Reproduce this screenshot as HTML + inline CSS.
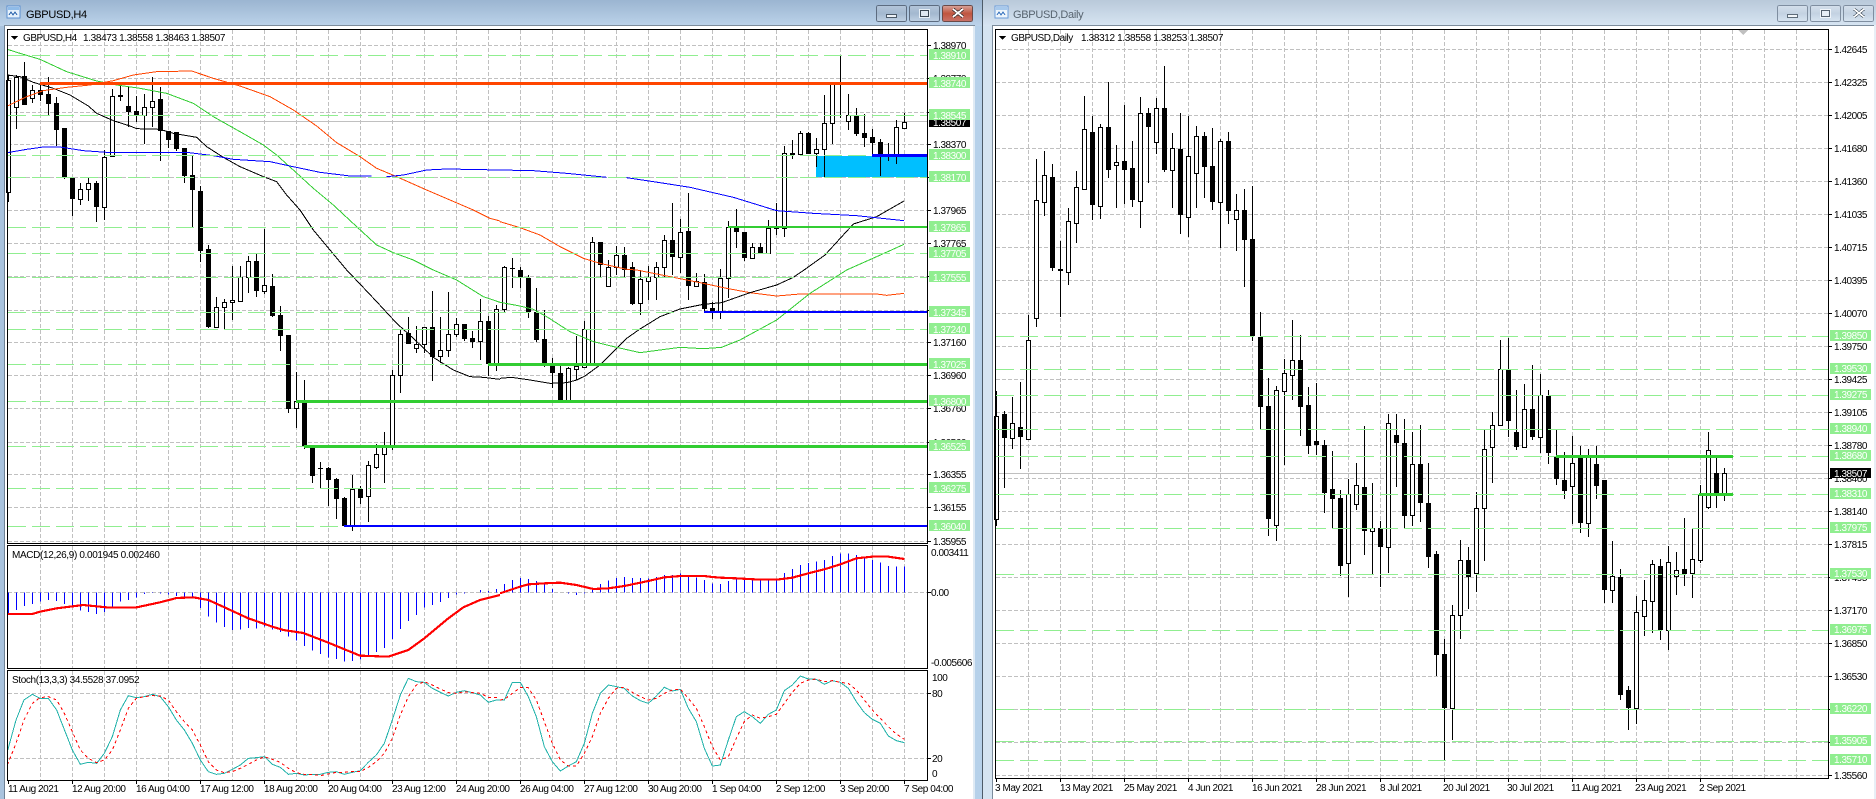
<!DOCTYPE html>
<html><head><meta charset="utf-8"><title>GBPUSD</title>
<style>
html,body{margin:0;padding:0;background:#fff;overflow:hidden}
svg{display:block}
text{font-family:"Liberation Sans",sans-serif;font-size:10px;letter-spacing:-.45px;fill:#000}
.w text{fill:#fff}
.h{letter-spacing:-.35px}
.tt{font-size:11px;letter-spacing:-.3px}
path,line,rect,polyline{shape-rendering:crispEdges}
.gr{fill:none;stroke:#c0c0c0;stroke-width:1;stroke-dasharray:4 2}
.lv{fill:none;stroke:#90ee90;stroke-width:1;stroke-dasharray:18 6}
.wk{fill:none;stroke:#000;stroke-width:1}
.bb{fill:#000}
.wb{fill:#fff;stroke:#000;stroke-width:1}
.ma{fill:none;stroke-width:3}
</style></head><body>
<svg width="1876" height="799" viewBox="0 0 1876 799" xmlns="http://www.w3.org/2000/svg">
<defs>
<linearGradient id="a" x1="0" y1="0" x2="0" y2="1"><stop offset="0" stop-color="#9bb5d1"/><stop offset="1" stop-color="#bcd3ea"/></linearGradient>
<linearGradient id="b" x1="0" y1="0" x2="0" y2="1"><stop offset="0" stop-color="#b9c9da"/><stop offset="1" stop-color="#d7e5f2"/></linearGradient>
<linearGradient id="c" x1="0" y1="0" x2="0" y2="1"><stop offset="0" stop-color="#b4c6da"/><stop offset=".5" stop-color="#a3b8cf"/><stop offset="1" stop-color="#c0d2e4"/></linearGradient>
<linearGradient id="d" x1="0" y1="0" x2="0" y2="1"><stop offset="0" stop-color="#d8a59c"/><stop offset=".5" stop-color="#c0553f"/><stop offset="1" stop-color="#c9736a"/></linearGradient>
<linearGradient id="e" x1="0" y1="0" x2="0" y2="1"><stop offset="0" stop-color="#d5e0ec"/><stop offset=".5" stop-color="#c3d2e2"/><stop offset="1" stop-color="#d8e5f1"/></linearGradient>
</defs>
<rect width="1876" height="799" fill="#fff"/>
<!-- left window frame -->
<rect x="0" y="0" width="983" height="26" fill="url(#a)"/>
<rect x="0" y="26" width="4" height="773" fill="#a9c3de"/>
<rect x="4" y="26" width="1" height="773" fill="#6f8296"/>
<rect x="975" y="26" width="7" height="773" fill="#b6d1ea"/>
<rect x="973" y="26" width="2" height="773" fill="#dfeaf4"/>
<rect x="4" y="25" width="971" height="1" fill="#7c8c9c"/>
<rect x="982" y="0" width="1" height="799" fill="#4d5b68"/>
<!-- right window frame -->
<rect x="983" y="0" width="893" height="26" fill="url(#b)"/>
<rect x="983" y="26" width="9" height="773" fill="#d5e4f1"/>
<rect x="992" y="26" width="1" height="773" fill="#7c8c9c"/>
<rect x="992" y="25" width="882" height="1" fill="#7c8c9c"/>
<rect x="1874" y="25" width="2" height="774" fill="#e8eff6"/>
<!-- title bars -->
<g>
<rect x="7" y="6" width="13" height="12" fill="#e6f1fb" stroke="#5b8fd0" stroke-width="1"/>
<rect x="8" y="7" width="11" height="3" fill="#8fbbe8"/>
<path d="M9 15l2-3 2 3 2-3 2 3" fill="none" stroke="#3f73b5" stroke-width="1"/>
<text x="26" y="18" class="tt" fill="#101820">GBPUSD,H4</text>
<rect x="876.5" y="5.5" width="30" height="16" rx="2" fill="url(#c)" stroke="#5d6c80"/>
<rect x="886.5" y="14.5" width="10" height="3" fill="#eef3f8" stroke="#4a5866"/>
<rect x="909.5" y="5.5" width="30" height="16" rx="2" fill="url(#c)" stroke="#5d6c80"/>
<rect x="919.5" y="9.5" width="10" height="8" fill="none" stroke="#e6eef5"/>
<rect x="920.5" y="10.5" width="8" height="6" fill="#dfe8f1" stroke="#3a4652"/>
<rect x="942.5" y="5.5" width="30" height="16" rx="2" fill="url(#d)" stroke="#6a4a48"/>
<path d="M953 9l10 8M963 9l-10 8" stroke="#4c3a38" stroke-width="3.4" fill="none"/>
<path d="M953 9l10 8M963 9l-10 8" stroke="#fff" stroke-width="1.8" fill="none"/>
</g>
<g>
<rect x="995" y="6" width="13" height="12" fill="#eef5fb" stroke="#6a9bd8" stroke-width="1"/>
<rect x="996" y="7" width="11" height="3" fill="#a7c9ec"/>
<path d="M997 15l2-3 2 3 2-3 2 3" fill="none" stroke="#4a80c4" stroke-width="1"/>
<text x="1013" y="18" class="tt" style="fill:#58646f">GBPUSD,Daily</text>
<rect x="1777.5" y="5.5" width="30" height="16" rx="2" fill="url(#e)" stroke="#7f8ea0"/>
<rect x="1787.5" y="14.5" width="10" height="3" fill="#f2f6fa" stroke="#5d6b78"/>
<rect x="1810.5" y="5.5" width="30" height="16" rx="2" fill="url(#e)" stroke="#7f8ea0"/>
<rect x="1820.5" y="9.5" width="10" height="8" fill="none" stroke="#f0f5fa"/>
<rect x="1821.5" y="10.5" width="8" height="6" fill="#e8eff6" stroke="#55616e"/>
<rect x="1843.5" y="5.5" width="30" height="16" rx="2" fill="url(#e)" stroke="#7f8ea0"/>
<path d="M1854 9l10 8M1864 9l-10 8" stroke="#66727e" stroke-width="3.2" fill="none"/>
<path d="M1854 9l10 8M1864 9l-10 8" stroke="#fff" stroke-width="1.6" fill="none"/>
</g>

<!-- ============ LEFT CHART ============ -->
<path class="gr" d="M8 45.5H927M8 78.5H927M8 112.5H927M8 144.5H927M8 177.5H927M8 210.5H927M8 243.5H927M8 276.5H927M8 310.5H927M8 342.5H927M8 375.5H927M8 408.5H927M8 442.5H927M8 474.5H927M8 507.5H927M8 541.5H927M8 592.5H927M8 693.5H927M8 758.5H927"/>
<path class="gr" d="M40.5 30V543M72.5 30V543M104.5 30V543M136.5 30V543M168.5 30V543M200.5 30V543M232.5 30V543M264.5 30V543M296.5 30V543M328.5 30V543M360.5 30V543M392.5 30V543M424.5 30V543M456.5 30V543M488.5 30V543M520.5 30V543M552.5 30V543M584.5 30V543M616.5 30V543M648.5 30V543M680.5 30V543M712.5 30V543M744.5 30V543M776.5 30V543M808.5 30V543M840.5 30V543M872.5 30V543M904.5 30V543"/>
<path class="gr" d="M40.5 546V668M72.5 546V668M104.5 546V668M136.5 546V668M168.5 546V668M200.5 546V668M232.5 546V668M264.5 546V668M296.5 546V668M328.5 546V668M360.5 546V668M392.5 546V668M424.5 546V668M456.5 546V668M488.5 546V668M520.5 546V668M552.5 546V668M584.5 546V668M616.5 546V668M648.5 546V668M680.5 546V668M712.5 546V668M744.5 546V668M776.5 546V668M808.5 546V668M840.5 546V668M872.5 546V668M904.5 546V668"/>
<path class="gr" d="M40.5 671V780M72.5 671V780M104.5 671V780M136.5 671V780M168.5 671V780M200.5 671V780M232.5 671V780M264.5 671V780M296.5 671V780M328.5 671V780M360.5 671V780M392.5 671V780M424.5 671V780M456.5 671V780M488.5 671V780M520.5 671V780M552.5 671V780M584.5 671V780M616.5 671V780M648.5 671V780M680.5 671V780M712.5 671V780M744.5 671V780M776.5 671V780M808.5 671V780M840.5 671V780M872.5 671V780M904.5 671V780"/>
<rect x="8" y="121" width="919" height="1" fill="#c0c0c0"/>
<rect x="816" y="156" width="111" height="21" fill="#00bfff"/>
<path class="wk" d="M8.5 75V202M16.5 75V129M24.5 62V105M32.5 85V103M40.5 85V101M48.5 77V115M56.5 97V146M64.5 128V179M72.5 178V216M80.5 183V205M88.5 178V201M96.5 181V222M104.5 150V220M112.5 89V156M120.5 85V101M128.5 87V127M136.5 96V122M144.5 94V144M152.5 77V127M160.5 87V161M168.5 131V148M176.5 132V151M184.5 148V183M192.5 156V227M200.5 186V262M208.5 245V328M216.5 297V327M224.5 299V329M232.5 266V320M240.5 266V301M248.5 256V293M256.5 254V297M264.5 229V294M272.5 274V317M280.5 306V351M288.5 335V413M296.5 372V428M304.5 380V449M312.5 448V483M320.5 462V488M328.5 467V506M336.5 478V519M344.5 497V526M352.5 475V531M360.5 486V504M368.5 461V522M376.5 444V469M384.5 432V483M392.5 370V450M400.5 329V393M408.5 317V344M416.5 326V353M424.5 327V353M432.5 291V381M440.5 317V363M448.5 292V357M456.5 318V337M464.5 324V341M472.5 331V348M480.5 299V360M488.5 316V376M496.5 305V371M504.5 266V312M512.5 258V288M520.5 267V288M528.5 275V318M536.5 288V342M544.5 310V367M552.5 358V388M560.5 366V403M568.5 367V400M576.5 336V380M584.5 321V368M592.5 237V365M600.5 242V278M608.5 260V286M616.5 246V275M624.5 247V277M632.5 262V305M640.5 270V315M648.5 266V300M656.5 262V300M664.5 235V277M672.5 203V275M680.5 219V273M688.5 193V300M696.5 273V286M704.5 274V312M712.5 302V319M720.5 269V319M728.5 221V298M736.5 209V248M744.5 232V261M752.5 243V258M760.5 243V253M768.5 220V253M776.5 203V235M784.5 146V237M792.5 140V159M800.5 131V154M808.5 132V154M816.5 138V167M824.5 95V177M832.5 83V144M840.5 56V118M848.5 94V130M856.5 108V136M864.5 114V147M872.5 129V155M880.5 139V176M888.5 143V161M896.5 120V164M904.5 113V128"/>
<path class="bb" d="M22 76h5V105h-5zM38 90h5V95h-5zM46 94h5V104h-5zM54 103h5V130h-5zM62 128h5V178h-5zM70 178h5V199h-5zM94 183h5V207h-5zM126 106h5V112h-5zM134 111h5V115h-5zM158 99h5V131h-5zM166 131h5V140h-5zM174 132h5V149h-5zM182 148h5V176h-5zM190 175h5V190h-5zM198 191h5V251h-5zM206 249h5V327h-5zM254 261h5V291h-5zM270 286h5V316h-5zM278 315h5V336h-5zM286 335h5V409h-5zM302 401h5V446h-5zM310 448h5V476h-5zM318 468h5v1h-5zM326 468h5V480h-5zM334 479h5V499h-5zM342 498h5V526h-5zM358 489h5V498h-5zM406 333h5V344h-5zM430 327h5V357h-5zM462 324h5V339h-5zM470 338h5V342h-5zM486 321h5V364h-5zM510 268h5v1h-5zM518 270h5V278h-5zM526 278h5V312h-5zM534 312h5V340h-5zM542 339h5V363h-5zM550 366h5V373h-5zM558 373h5V400h-5zM598 242h5V265h-5zM622 255h5V270h-5zM630 267h5V304h-5zM670 240h5V257h-5zM686 231h5V286h-5zM702 282h5V309h-5zM710 308h5V312h-5zM734 227h5V232h-5zM742 232h5V258h-5zM758 247h5V253h-5zM774 228h5v1h-5zM790 153h5V155h-5zM806 133h5V154h-5zM838 84h5v1h-5zM854 116h5V134h-5zM862 133h5V138h-5zM870 137h5V143h-5zM878 142h5V155h-5zM886 155h5v1h-5z"/>
<path class="wb" d="M6.500 80.5h4V192.500h-4zM14.500 77.500h4V107.500h-4zM30.500 90.500h4V98.500h-4zM78.500 189.500h4V199.500h-4zM86.500 183.500h4V189.500h-4zM102.500 157.500h4V207.500h-4zM110.500 96.500h4V156.500h-4zM118.500 95.500h4v1h-4zM142.500 107.500h4V115.500h-4zM150.500 101.500h4V107.500h-4zM214.500 307.500h4V327.500h-4zM222.500 302.500h4V307.500h-4zM230.500 300.500h4V302.500h-4zM238.500 277.500h4V301.500h-4zM246.500 261.500h4V277.500h-4zM262.500 285.500h4V291.500h-4zM294.500 401.500h4V408.500h-4zM350.500 489.500h4V526.500h-4zM366.500 465.500h4V496.500h-4zM374.500 454.500h4V467.500h-4zM382.500 446.500h4V454.500h-4zM390.500 375.500h4V446.500h-4zM398.500 334.500h4V375.500h-4zM414.500 344.500h4V348.500h-4zM422.500 327.500h4V344.500h-4zM438.500 350.500h4V356.500h-4zM446.500 334.500h4V350.500h-4zM454.500 324.500h4V334.500h-4zM478.500 321.500h4V341.500h-4zM494.500 309.500h4V364.500h-4zM502.500 267.500h4V309.500h-4zM566.500 368.500h4V400.500h-4zM574.500 366.500h4V369.500h-4zM582.500 329.500h4V367.500h-4zM590.500 242.500h4V364.500h-4zM606.500 267.500h4V286.500h-4zM614.500 255.500h4V267.500h-4zM638.500 279.500h4V303.500h-4zM646.500 277.500h4V281.500h-4zM654.500 267.500h4V277.500h-4zM662.500 240.500h4V267.500h-4zM678.500 232.500h4V257.500h-4zM694.500 281.500h4V286.500h-4zM718.500 278.500h4V312.500h-4zM726.500 227.500h4V278.500h-4zM750.500 247.500h4V258.500h-4zM766.500 228.500h4V253.500h-4zM782.500 153.500h4V228.500h-4zM798.500 133.500h4V154.500h-4zM814.500 149.500h4V153.500h-4zM822.500 123.500h4V149.500h-4zM830.500 83.500h4V123.500h-4zM846.500 115.500h4V121.500h-4zM894.500 127.500h4V154.500h-4zM902.500 122.500h4V128.500h-4z"/>
<!-- MAs in zoom coordinates -->
<g transform="scale(.33333)">
<polyline class="ma" stroke="#000" points="22,225 60,230 100,247 160,265 210,285 265,318 290,340 340,362 390,378 410,386 480,388 520,400 590,412 620,440 670,472 720,500 790,530 830,545 860,585 900,630 940,690 990,750 1040,810 1080,852 1130,905 1190,970 1240,1015 1300,1072 1360,1110 1410,1130 1450,1132 1500,1138"/>
<polyline class="ma" stroke="#32cd32" points="22,148 60,160 120,178 200,215 290,243 350,255 420,265 500,280 580,310 640,350 720,395 790,435 830,465 880,510 940,565 1000,615 1070,680 1130,735 1180,758 1240,780 1300,810 1370,840 1450,890 1500,907"/>
<polyline class="ma" stroke="#ff4500" points="22,318 80,290 130,272 200,262 270,255 340,242 400,225 470,215 575,213 640,235 720,258 810,290 880,330 950,378 1010,428 1080,470 1130,505 1190,530 1280,570 1350,600 1420,630 1470,655 1500,663"/>
<polyline class="ma" stroke="#0000ff" points="22,458 80,448 130,441 180,441 250,452 320,457 560,457 640,467 700,478 810,485 870,498 960,517 1050,528 1115,528"/>
<polyline class="ma" stroke="#0000ff" points="1160,530 1210,525 1280,510 1340,507 1500,510"/>
</g>
<g transform="translate(500,0) scale(.33333)">
<polyline class="ma" stroke="#ff4500" points="0,665 60,683 120,705 180,740 250,775 300,790 380,808 410,810 470,822 560,840 610,850 680,865 750,878 830,888 900,882 1130,882 1160,886 1212,880"/>
<polyline class="ma" stroke="#000" points="0,1135 35,1132 90,1140 150,1150 200,1148 230,1140 255,1128 300,1095 380,1015 420,987 480,950 540,927 610,913 665,908 750,878 830,855 880,832 915,808 975,765 1060,672 1130,650 1212,603"/>
<polyline class="ma" stroke="#32cd32" points="0,907 60,918 100,928 140,950 210,995 280,1025 350,1042 420,1058 480,1050 540,1042 610,1046 665,1042 720,1020 830,960 880,920 930,880 1040,810 1130,770 1212,733"/>
<polyline class="ma" stroke="#0000ff" points="0,510 100,512 200,520 320,532"/>
<polyline class="ma" stroke="#0000ff" points="380,533 480,548 570,562 700,592 830,632 940,640 1070,647 1212,662"/>
</g>
<path class="lv" d="M8 55.500H927M8 115.500H927M8 155.500H927M8 177.500H927M8 227.500H927M8 253.500H927M8 277.500H927M8 312.500H927M8 329.500H927M8 364.500H927M8 401.500H927M8 446.500H927M8 488.500H927M8 526.500H927"/>
<rect x="40" y="82" width="887" height="3" fill="#ff4500"/>
<rect x="872" y="154" width="55" height="3" fill="#0000ff"/>
<rect x="728" y="226" width="199" height="2" fill="#32cd32"/>
<rect x="488" y="363" width="439" height="3" fill="#32cd32"/>
<rect x="296" y="400" width="631" height="3" fill="#32cd32"/>
<rect x="304" y="445" width="623" height="3" fill="#32cd32"/>
<rect x="704" y="311" width="223" height="2" fill="#0000ff"/>
<rect x="344" y="525" width="583" height="2" fill="#0000ff"/>
<!-- MACD -->
<g transform="translate(0,530) scale(.33333)">
<path stroke="#0000ff" stroke-width="3" fill="none" d="M25.500 187V250M49.500 187V240M73.500 187V228M97.500 187V222M121.500 187V215M145.500 187V210M169.500 187V213M193.500 187V222M217.500 187V226M241.500 187V242M265.500 187V246M289.500 187V252M313.500 187V246M337.500 187V232M361.500 187V215M385.500 187V210M409.500 187V203M433.500 187V192M457.500 187V189M481.500 187V191M505.500 187V194M529.500 187V198M553.500 187V200M577.500 187V200M601.500 187V234M625.500 187V260M649.500 187V278M673.500 187V291M697.500 187V300M721.500 187V299M745.500 187V294M769.500 187V296M793.500 187V290M817.500 187V298M841.500 187V306M865.500 187V320M889.500 187V332M913.500 187V348M937.500 187V362M961.500 187V372M985.500 187V382M1009.500 187V387M1033.500 187V395M1057.500 187V393M1081.500 187V388M1105.500 187V380M1129.500 187V366M1153.500 187V354M1177.500 187V327M1201.500 187V297M1225.500 187V273M1249.500 187V255M1273.500 187V233M1297.500 187V225M1321.500 187V216M1345.500 187V204M1369.500 187V194M1393.500 187V190M1441.500 187V180M1465.500 187V183M1489.500 187V177"/>
<polyline fill="none" stroke="#ff0000" stroke-width="6.500" points="22,252 97,252 120,245 170,235 250,225 330,233 410,232 480,217 530,204 580,202 625,210 680,235 745,265 817,290 850,300 910,309 985,338 1080,377 1165,380 1225,360 1273,325 1345,265 1390,232 1440,210 1500,195"/>
<polyline fill="none" stroke="#20b2aa" stroke-width="3" points="22,665 48,570 72,510 97,493 120,505 145,505 170,540 217,660 241,703 265,697 290,700 313,670 337,620 361,540 385,497 409,503 433,500 457,493 481,500 505,530 529,570 553,600 577,640 601,690 625,725 649,733 673,730 697,718 721,705 745,685 769,683 793,680 817,703 841,712 865,733 889,730 913,735 937,733 961,733 985,727 1009,725 1033,733 1057,727 1081,722 1105,697 1129,675 1153,640 1177,570 1201,495 1225,445 1249,455 1273,457 1297,475 1321,487 1345,498 1369,487 1393,482 1417,488 1441,495 1465,517 1489,510 1500,510"/>
<polyline fill="none" stroke="#ff0000" stroke-width="3" stroke-dasharray="9 9" points="22,705 48,640 72,570 97,520 120,503 145,500 170,510 193,550 217,605 241,660 265,685 290,698 313,690 337,660 361,600 385,535 409,505 433,500 457,497 481,498 505,510 529,545 553,575 577,600 601,645 625,695 649,720 673,728 697,725 721,715 745,703 769,690 793,680 817,688 841,697 865,715 889,728 913,733 937,733 961,737 985,732 1009,727 1033,727 1057,725 1081,725 1105,712 1129,695 1153,670 1177,625 1201,555 1225,500 1249,465 1273,455 1297,465 1321,477 1345,488 1369,490 1393,485 1417,488 1441,490 1465,502 1489,503 1500,505"/>
</g>
<g transform="translate(500,530) scale(.33333)">
<path stroke="#0000ff" stroke-width="3" fill="none" d="M13.500 187V162M37.500 187V150M61.500 187V144M85.500 187V147M109.500 187V153M133.500 187V160M157.500 187V177M205.500 187V191M229.500 187V195M253.500 187V190M277.500 187V180M301.500 187V162M325.500 187V152M349.500 187V144M373.500 187V141M397.500 187V144M421.500 187V144M445.500 187V145M469.500 187V141M493.500 187V135M517.500 187V135M541.500 187V130M565.500 187V138M589.500 187V143M613.500 187V150M637.500 187V160M661.500 187V162M685.500 187V153M709.500 187V147M733.500 187V147M757.500 187V152M781.500 187V150M805.500 187V148M829.500 187V145M853.500 187V129M877.500 187V117M901.500 187V105M925.500 187V99M949.500 187V95M973.500 187V90M997.500 187V78M1021.500 187V70M1045.500 187V70M1069.500 187V75M1093.500 187V85M1117.500 187V90M1141.500 187V98M1165.500 187V108M1189.500 187V110M1213.500 187V110"/>
<polyline fill="none" stroke="#ff0000" stroke-width="6.500" points="0,190 60,170 85,163 133,160 180,158 229,165 280,177 325,175 373,168 445,153 493,142 541,138 613,138 637,141 661,143 709,145 781,149 829,149 877,143 925,130 973,118 1021,103 1069,85 1117,80 1165,80 1213,87"/>
<polyline fill="none" stroke="#20b2aa" stroke-width="3" points="0,510 13,510 37,457 61,457 85,500 109,560 133,650 157,695 181,723 205,708 229,695 253,640 277,550 301,490 325,465 349,470 373,475 397,498 421,512 445,520 469,498 493,472 517,483 541,478 565,535 589,575 613,655 637,708 661,705 685,630 709,560 733,545 757,560 781,580 805,553 829,540 853,482 877,465 901,438 925,447 949,448 973,463 997,452 1021,457 1045,475 1069,515 1093,548 1117,568 1141,580 1165,618 1189,632 1213,638"/>
<polyline fill="none" stroke="#ff0000" stroke-width="3" stroke-dasharray="9 9" points="0,510 13,508 37,490 61,473 85,473 109,510 133,575 157,640 181,690 205,708 229,708 253,670 277,620 301,550 325,505 349,475 373,472 397,487 421,500 445,510 469,505 493,490 517,480 541,478 565,505 589,535 613,590 637,650 661,690 685,680 709,625 733,575 757,555 781,565 805,560 829,553 853,520 877,487 901,460 925,450 949,447 973,455 997,452 1021,457 1045,460 1069,480 1093,510 1117,540 1141,565 1165,590 1189,612 1213,628"/>
</g>
<!-- left pane borders -->
<path fill="none" stroke="#000" stroke-width="1" d="M7.500 29.500H927.500V543.500H7.500ZM7.500 545.500H927.500V668.500H7.500ZM7.500 670.500H927.500V780.500H7.500Z"/>
<path class="wk" d="M928 45.500h3M928 78.500h3M928 112.500h3M928 144.500h3M928 177.500h3M928 210.500h3M928 243.500h3M928 276.500h3M928 310.500h3M928 342.500h3M928 375.500h3M928 408.500h3M928 442.500h3M928 474.500h3M928 507.500h3M928 541.500h3M928 592.500h3M928 693.500h3M928 758.500h3M8.500 781v3M72.500 781v3M136.500 781v3M200.500 781v3M264.500 781v3M328.500 781v3M392.500 781v3M456.500 781v3M520.500 781v3M584.500 781v3M648.500 781v3M712.500 781v3M776.500 781v3M840.500 781v3M904.500 781v3"/>
<path d="M11 36h7l-3.500 4z" fill="#000"/>
<text x="23" y="41">GBPUSD,H4</text>
<text x="83" y="41" class="h">1.38473 1.38558 1.38463 1.38507</text>
<text x="12" y="558" style="letter-spacing:-.35px">MACD(12,26,9) 0.001945 0.002460</text>
<text x="12" y="683" style="letter-spacing:-.37px">Stoch(13,3,3) 34.5528 37.0952</text>
<g>
<text x="933" y="49">1.38970</text><text x="933" y="82">1.38770</text><text x="933" y="116">1.38570</text><text x="933" y="148">1.38370</text><text x="933" y="181">1.38170</text><text x="933" y="214">1.37965</text><text x="933" y="247">1.37765</text><text x="933" y="280">1.37560</text><text x="933" y="314">1.37360</text><text x="933" y="346">1.37160</text><text x="933" y="379">1.36960</text><text x="933" y="412">1.36760</text><text x="933" y="446">1.36560</text><text x="933" y="478">1.36355</text><text x="933" y="511">1.36155</text><text x="933" y="545">1.35955</text>
<text x="931" y="556">0.003411</text><text x="931" y="596">0.00</text><text x="931" y="666">-0.005606</text>
<text x="932" y="681">100</text><text x="932" y="697">80</text><text x="932" y="762">20</text><text x="932" y="777">0</text>
</g>
<rect x="929" y="116" width="41" height="11" fill="#000"/>
<text x="933" y="126" style="fill:#fff">1.38507</text>
<g fill="#90ee90">
<rect x="929" y="49" width="41" height="11"/><rect x="929" y="77" width="41" height="11"/><rect x="929" y="109" width="41" height="11"/><rect x="929" y="149" width="41" height="11"/><rect x="929" y="171" width="41" height="11"/><rect x="929" y="221" width="41" height="11"/><rect x="929" y="247" width="41" height="11"/><rect x="929" y="271" width="41" height="11"/><rect x="929" y="306" width="41" height="11"/><rect x="929" y="323" width="41" height="11"/><rect x="929" y="358" width="41" height="11"/><rect x="929" y="395" width="41" height="11"/><rect x="929" y="440" width="41" height="11"/><rect x="929" y="482" width="41" height="11"/><rect x="929" y="520" width="41" height="11"/>
</g>
<g class="w">
<text x="933" y="59">1.38910</text><text x="933" y="87">1.38740</text><text x="933" y="119">1.38545</text><text x="933" y="159">1.38300</text><text x="933" y="181">1.38170</text><text x="933" y="231">1.37865</text><text x="933" y="257">1.37705</text><text x="933" y="281">1.37555</text><text x="933" y="316">1.37345</text><text x="933" y="333">1.37240</text><text x="933" y="368">1.37025</text><text x="933" y="405">1.36800</text><text x="933" y="450">1.36525</text><text x="933" y="492">1.36275</text><text x="933" y="530">1.36040</text>
</g>
<g>
<text x="8" y="792">11 Aug 2021</text><text x="72" y="792">12 Aug 20:00</text><text x="136" y="792">16 Aug 04:00</text><text x="200" y="792">17 Aug 12:00</text><text x="264" y="792">18 Aug 20:00</text><text x="328" y="792">20 Aug 04:00</text><text x="392" y="792">23 Aug 12:00</text><text x="456" y="792">24 Aug 20:00</text><text x="520" y="792">26 Aug 04:00</text><text x="584" y="792">27 Aug 12:00</text><text x="648" y="792">30 Aug 20:00</text><text x="712" y="792">1 Sep 04:00</text><text x="776" y="792">2 Sep 12:00</text><text x="840" y="792">3 Sep 20:00</text><text x="904" y="792">7 Sep 04:00</text>
</g>

<!-- ============ RIGHT CHART ============ -->
<path class="gr" d="M996 49.500H1828M996 82.500H1828M996 115.500H1828M996 148.500H1828M996 181.500H1828M996 214.500H1828M996 247.500H1828M996 280.500H1828M996 313.500H1828M996 346.500H1828M996 379.500H1828M996 412.500H1828M996 445.500H1828M996 478.500H1828M996 511.500H1828M996 544.500H1828M996 577.500H1828M996 610.500H1828M996 643.500H1828M996 676.500H1828M996 709.500H1828M996 742.500H1828M996 775.500H1828"/>
<path class="gr" d="M1028.500 30V778M1060.500 30V778M1092.500 30V778M1124.500 30V778M1156.500 30V778M1188.500 30V778M1220.500 30V778M1252.500 30V778M1284.500 30V778M1316.500 30V778M1348.500 30V778M1380.500 30V778M1412.500 30V778M1444.500 30V778M1476.500 30V778M1508.500 30V778M1540.500 30V778M1572.500 30V778M1604.500 30V778M1636.500 30V778M1668.500 30V778M1700.500 30V778M1732.500 30V778M1764.500 30V778M1796.500 30V778"/>
<rect x="996" y="473" width="832" height="1" fill="#c0c0c0"/>
<path class="wk" d="M996.500 391V526M1004.500 411V488M1012.500 397V449M1020.500 382V469M1028.500 315V439M1036.500 159V327M1044.500 151V216M1052.500 164V271M1060.500 241V317M1068.500 208V285M1076.500 171V243M1084.500 96V189M1092.500 116V220M1100.500 124V219M1108.500 82V178M1116.500 145V208M1124.500 105V204M1132.500 141V207M1140.500 97V228M1148.500 108V183M1156.500 98V154M1164.500 66V172M1172.500 133V208M1180.500 113V234M1188.500 116V237M1196.500 126V208M1204.500 132V198M1212.500 128V210M1220.500 139V248M1228.500 132V224M1236.500 194V251M1244.500 189V287M1252.500 186V341M1260.500 312V429M1268.500 378V536M1276.500 386V541M1284.500 359V465M1292.500 320V400M1300.500 335V436M1308.500 387V454M1316.500 383V455M1324.500 440V513M1332.500 451V528M1340.500 490V576M1348.500 479V597M1356.500 463V510M1364.500 426V555M1372.500 483V574M1380.500 521V587M1388.500 414V573M1396.500 414V487M1404.500 419V528M1412.500 432V526M1420.500 425V522M1428.500 463V568M1436.500 551V676M1444.500 639V760M1452.500 605V740M1460.500 540V639M1468.500 547V609M1476.500 492V592M1484.500 430V561M1492.500 412V483M1500.500 340V425M1508.500 338V437M1516.500 390V450M1524.500 384V447M1532.500 365V440M1540.500 374V453M1548.500 390V464M1556.500 430V485M1564.500 452V499M1572.500 436V524M1580.500 446V533M1588.500 449V537M1596.500 446V499M1604.500 480V603M1612.500 541V603M1620.500 569V700M1628.500 686V730M1636.500 596V724M1644.500 580V636M1652.500 560V633M1660.500 559V640M1668.500 546V650M1676.500 552V595M1684.500 518V586M1692.500 528V598M1700.500 485V563M1708.500 432V509M1716.500 458V508M1724.500 468V501"/>
<path class="bb" d="M1002 414h5V438h-5zM1018 427h5V437h-5zM1050 177h5V268h-5zM1058 269h5v2h-5zM1090 132h5V205h-5zM1106 127h5V170h-5zM1122 161h5V170h-5zM1130 168h5V200h-5zM1146 113h5V127h-5zM1162 108h5V170h-5zM1178 149h5V215h-5zM1202 136h5V167h-5zM1210 166h5V202h-5zM1226 141h5V211h-5zM1242 210h5V240h-5zM1250 239h5V336h-5zM1258 337h5V407h-5zM1266 406h5V519h-5zM1298 360h5V407h-5zM1306 405h5V446h-5zM1314 441h5V445h-5zM1322 445h5V493h-5zM1330 489h5V499h-5zM1338 498h5V566h-5zM1362 487h5V531h-5zM1378 528h5V547h-5zM1394 435h5V443h-5zM1402 443h5V516h-5zM1418 464h5V503h-5zM1426 503h5V557h-5zM1434 554h5V655h-5zM1442 654h5V708h-5zM1466 560h5V577h-5zM1506 370h5V421h-5zM1514 432h5V447h-5zM1530 409h5V437h-5zM1546 396h5V453h-5zM1554 457h5V479h-5zM1562 480h5V491h-5zM1578 457h5V523h-5zM1594 464h5V486h-5zM1602 480h5V590h-5zM1618 577h5V695h-5zM1626 690h5V708h-5zM1658 566h5V630h-5zM1682 569h5V574h-5zM1714 473h5V494h-5z"/>
<path class="wb" d="M994.500 416.500h4V519.500h-4zM1010.500 423.500h4V438.500h-4zM1026.500 340.500h4V439.500h-4zM1034.500 200.500h4V318.500h-4zM1042.500 175.500h4V202.500h-4zM1066.500 221.500h4V272.500h-4zM1074.500 187.500h4V223.500h-4zM1082.500 129.500h4V189.500h-4zM1098.500 127.500h4V206.500h-4zM1114.500 162.500h4V165.500h-4zM1138.500 113.500h4V201.500h-4zM1154.500 108.500h4V142.500h-4zM1170.500 148.500h4V170.500h-4zM1186.500 156.500h4V217.500h-4zM1194.500 136.500h4V173.500h-4zM1218.500 141.500h4V202.500h-4zM1234.500 210.500h4V219.500h-4zM1274.500 390.500h4V525.500h-4zM1282.500 373.500h4V391.500h-4zM1290.500 360.500h4V375.500h-4zM1346.500 494.500h4V563.500h-4zM1354.500 485.500h4V504.500h-4zM1370.500 528.500h4V531.500h-4zM1386.500 423.500h4V547.500h-4zM1410.500 464.500h4V515.500h-4zM1450.500 615.500h4V708.500h-4zM1458.500 560.500h4V615.500h-4zM1474.500 508.500h4V573.500h-4zM1482.500 449.500h4V508.500h-4zM1490.500 425.500h4V447.500h-4zM1498.500 369.500h4V425.500h-4zM1522.500 409.500h4V447.500h-4zM1538.500 395.500h4V437.500h-4zM1570.500 463.500h4V486.500h-4zM1586.500 457.500h4V523.500h-4zM1610.500 576.500h4V590.500h-4zM1634.500 612.500h4V708.500h-4zM1642.500 600.500h4V616.500h-4zM1650.500 564.500h4V601.500h-4zM1666.500 562.500h4V630.500h-4zM1674.500 570.500h4V576.500h-4zM1690.500 559.500h4V573.500h-4zM1698.500 494.500h4V560.500h-4zM1706.500 450.500h4V507.500h-4zM1722.500 473.500h4V494.500h-4z"/>
<path class="lv" d="M996 336.500H1828M996 369.500H1828M996 395.500H1828M996 429.500H1828M996 456.500H1828M996 494.500H1828M996 528.500H1828M996 574.500H1828M996 630.500H1828M996 709.500H1828M996 741.500H1828M996 760.500H1828"/>
<rect x="1556" y="455" width="177" height="3" fill="#32cd32"/>
<rect x="1699" y="493" width="34" height="3" fill="#32cd32"/>
<path d="M1738 30h10l-5 5z" fill="#c0c0c0"/>
<path fill="none" stroke="#000" stroke-width="1" d="M995.500 29.500H1828.500V778.500H995.500Z"/>
<path class="wk" d="M1829 49.500h3M1829 82.500h3M1829 115.500h3M1829 148.500h3M1829 181.500h3M1829 214.500h3M1829 247.500h3M1829 280.500h3M1829 313.500h3M1829 346.500h3M1829 379.500h3M1829 412.500h3M1829 445.500h3M1829 478.500h3M1829 511.500h3M1829 544.500h3M1829 577.500h3M1829 610.500h3M1829 643.500h3M1829 676.500h3M1829 709.500h3M1829 742.500h3M1829 775.500h3M996.500 779v3M1060.500 779v3M1124.500 779v3M1188.500 779v3M1252.500 779v3M1316.500 779v3M1380.500 779v3M1444.500 779v3M1508.500 779v3M1572.500 779v3M1636.500 779v3M1700.500 779v3"/>
<path d="M999 36h7l-3.500 4z" fill="#000"/>
<text x="1011" y="41">GBPUSD,Daily</text>
<text x="1081" y="41" class="h">1.38312 1.38558 1.38253 1.38507</text>
<g>
<text x="1834" y="53">1.42645</text><text x="1834" y="86">1.42325</text><text x="1834" y="119">1.42005</text><text x="1834" y="152">1.41680</text><text x="1834" y="185">1.41360</text><text x="1834" y="218">1.41035</text><text x="1834" y="251">1.40715</text><text x="1834" y="284">1.40395</text><text x="1834" y="317">1.40070</text><text x="1834" y="350">1.39750</text><text x="1834" y="383">1.39425</text><text x="1834" y="416">1.39105</text><text x="1834" y="449">1.38780</text><text x="1834" y="482">1.38460</text><text x="1834" y="515">1.38140</text><text x="1834" y="548">1.37815</text><text x="1834" y="581">1.37495</text><text x="1834" y="614">1.37170</text><text x="1834" y="647">1.36850</text><text x="1834" y="680">1.36530</text><text x="1834" y="713">1.36205</text><text x="1834" y="746">1.35885</text><text x="1834" y="779">1.35560</text>
</g>
<rect x="1830" y="468" width="41" height="10" fill="#000"/>
<text x="1834" y="477" style="fill:#fff">1.38507</text>
<g fill="#90ee90">
<rect x="1830" y="330" width="41" height="11"/><rect x="1830" y="363" width="41" height="11"/><rect x="1830" y="389" width="41" height="11"/><rect x="1830" y="423" width="41" height="11"/><rect x="1830" y="450" width="41" height="11"/><rect x="1830" y="488" width="41" height="11"/><rect x="1830" y="522" width="41" height="11"/><rect x="1830" y="568" width="41" height="11"/><rect x="1830" y="624" width="41" height="11"/><rect x="1830" y="703" width="41" height="11"/><rect x="1830" y="735" width="41" height="11"/><rect x="1830" y="754" width="41" height="11"/>
</g>
<g class="w">
<text x="1834" y="339">1.39850</text><text x="1834" y="372">1.39530</text><text x="1834" y="398">1.39275</text><text x="1834" y="432">1.38940</text><text x="1834" y="459">1.38680</text><text x="1834" y="497">1.38310</text><text x="1834" y="531">1.37975</text><text x="1834" y="577">1.37530</text><text x="1834" y="633">1.36975</text><text x="1834" y="712">1.36220</text><text x="1834" y="744">1.35905</text><text x="1834" y="763">1.35710</text>
</g>
<g>
<text x="995" y="791">3 May 2021</text><text x="1060" y="791">13 May 2021</text><text x="1124" y="791">25 May 2021</text><text x="1188" y="791">4 Jun 2021</text><text x="1252" y="791">16 Jun 2021</text><text x="1316" y="791">28 Jun 2021</text><text x="1380" y="791">8 Jul 2021</text><text x="1443" y="791">20 Jul 2021</text><text x="1507" y="791">30 Jul 2021</text><text x="1571" y="791">11 Aug 2021</text><text x="1635" y="791">23 Aug 2021</text><text x="1699" y="791">2 Sep 2021</text>
</g>
</svg>
</body></html>
